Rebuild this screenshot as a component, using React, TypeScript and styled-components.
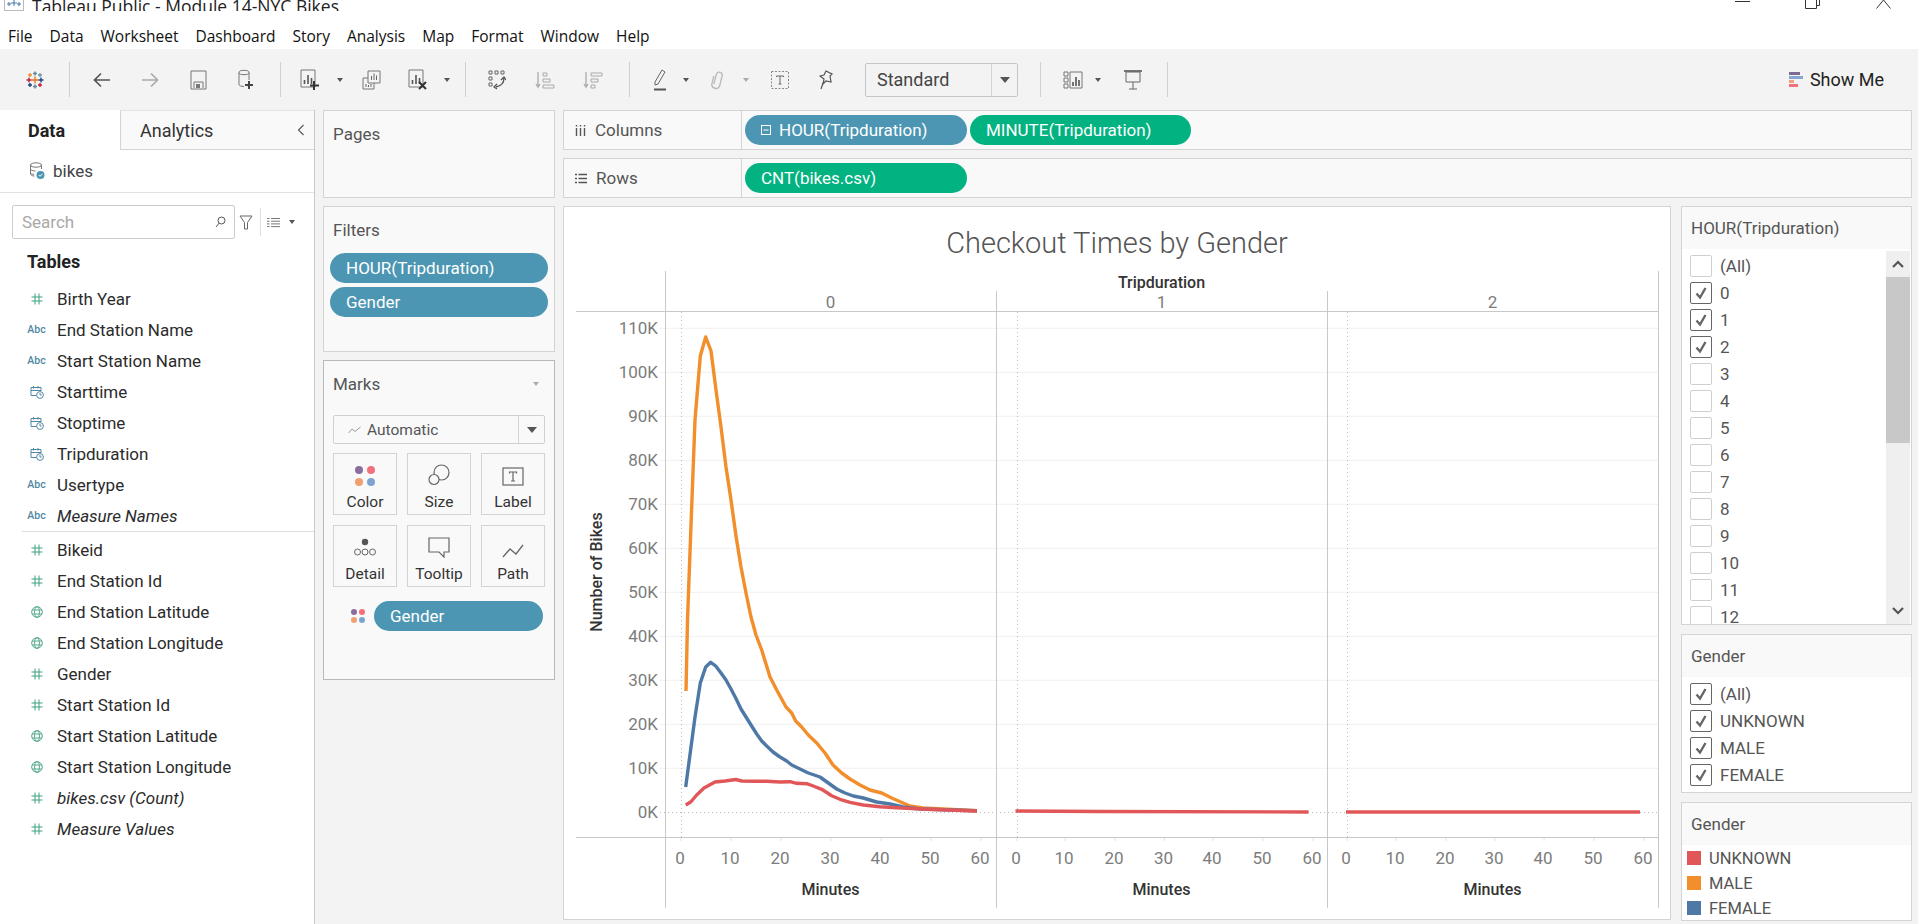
import React from "react";
import styled, { createGlobalStyle } from "styled-components";

const UI = `Roboto, "Liberation Sans", sans-serif`;

const Global = createGlobalStyle`
  html, body { margin: 0; padding: 0; background: #fff; }
  body { font-family: ${UI}; overflow: hidden; }
  * { box-sizing: border-box; }
`;

const Page = styled.div`
  width: 1918px;
  height: 924px;
  display: flex;
  flex-direction: column;
  overflow: hidden;
  background: #f3f3f3;
`;

/* window chrome */
const TitleBar = styled.div`
  height: 11px;
  flex: none;
  background: #fff;
  display: flex;
  align-items: flex-end;
  overflow: hidden;
  padding-left: 4px;
`;
const TitleText = styled.span`
  font: 17.5px/20px "Open Sans", sans-serif;
  color: #222;
  margin-left: 8px;
  margin-bottom: -5px;
  white-space: nowrap;
`;
const WindowButtons = styled.div`
  margin-left: auto;
  display: flex;
  align-self: flex-start;
`;
const WindowButton = styled.svg<{ $gap: number }>`
  display: block;
  margin-right: ${(p) => p.$gap}px;
`;

const MenuBar = styled.nav`
  height: 38px;
  flex: none;
  padding: 12px 0 0 8px;
  background: #fff;
  display: flex;
  align-items: center;
  gap: 17px;
  font: 15.5px "Open Sans", sans-serif;
  color: #111;
`;

/* toolbar */
const Toolbar = styled.div`
  height: 61px;
  flex: none;
  display: flex;
  align-items: center;
  background: #f3f3f3;
`;
const Slot = styled.div<{ $w: number }>`
  width: ${(p) => p.$w}px;
  flex: none;
  display: flex;
  justify-content: center;
  align-items: center;
`;
const ToolSep = styled.div<{ $l?: number; $r?: number }>`
  width: 1px;
  height: 35px;
  flex: none;
  background: #cfcfcf;
  margin-left: ${(p) => p.$l ?? 0}px;
  margin-right: ${(p) => p.$r ?? 0}px;
`;
const Caret = styled.i<{ $c?: string }>`
  display: block;
  width: 0;
  height: 0;
  border-left: 3.5px solid transparent;
  border-right: 3.5px solid transparent;
  border-top: 4px solid ${(p) => p.$c ?? "#555"};
`;
const StandardSelect = styled.div`
  width: 153px;
  height: 34px;
  margin-left: 24px;
  flex: none;
  display: flex;
  align-items: center;
  border: 1px solid #c6c6c6;
  border-radius: 2px;
  font-size: 18px;
  color: #444;
  padding-left: 11px;
`;
const SelectArrowBox = styled.div`
  margin-left: auto;
  width: 26px;
  height: 100%;
  border-left: 1px solid #d4d4d4;
  display: flex;
  align-items: center;
  justify-content: center;
`;
const SelectArrow = styled.i`
  display: block;
  width: 0;
  height: 0;
  border-left: 5px solid transparent;
  border-right: 5px solid transparent;
  border-top: 6px solid #555;
`;
const ShowMe = styled.div`
  margin-left: auto;
  margin-right: 34px;
  display: flex;
  align-items: center;
  gap: 7px;
  font-size: 18px;
  color: #222;
`;

/* main layout */
const Main = styled.div`
  flex: 1;
  min-height: 0;
  display: flex;
`;
const Side = styled.aside`
  width: 315px;
  flex: none;
  background: #fff;
  border-right: 1px solid #c9c9c9;
  display: flex;
  flex-direction: column;
`;
const Tabs = styled.div`
  height: 40px;
  flex: none;
  display: flex;
`;
const DataTab = styled.div`
  width: 120px;
  padding-left: 28px;
  display: flex;
  align-items: center;
  font-size: 18px;
  font-weight: 700;
  color: #222;
  background: #fff;
`;
const AnalyticsTab = styled.div`
  flex: 1;
  padding: 0 9px 0 19px;
  display: flex;
  align-items: center;
  justify-content: space-between;
  font-size: 18px;
  color: #333;
  background: #f9f9f9;
  border-left: 1px solid #d4d4d4;
  border-top: 1px solid #e4e4e4;
  border-bottom: 1px solid #d4d4d4;
`;
const SourceRow = styled.div`
  height: 43px;
  flex: none;
  padding-left: 29px;
  display: flex;
  align-items: center;
  gap: 8px;
  font-size: 17px;
  color: #444;
  border-bottom: 1px solid #e2e2e2;
`;
const SearchRow = styled.div`
  height: 34px;
  margin: 12px 0 0 12px;
  flex: none;
  display: flex;
  align-items: center;
`;
const SearchBox = styled.div`
  width: 223px;
  height: 34px;
  flex: none;
  padding: 0 8px 0 9px;
  display: flex;
  align-items: center;
  justify-content: space-between;
  border: 1px solid #cdcdcd;
  border-radius: 2px;
  font-size: 17px;
  color: #a8a8a8;
`;
const SearchTools = styled.div`
  display: flex;
  align-items: center;
  margin-left: 4px;
`;
const ToolDivider = styled.div`
  width: 1px;
  height: 28px;
  background: #e0e0e0;
  margin: 0 6px 0 7px;
`;
const TablesHeading = styled.div`
  height: 44px;
  flex: none;
  padding: 1px 0 0 27px;
  display: flex;
  align-items: center;
  font-size: 18px;
  font-weight: 700;
  color: #222;
`;
const FieldList = styled.div`
  display: flex;
  flex-direction: column;
`;
const FieldRow = styled.div<{ $italic?: boolean }>`
  height: 31px;
  flex: none;
  display: flex;
  align-items: center;
  font-size: 17px;
  font-style: ${(p) => (p.$italic ? "italic" : "normal")};
  color: #2b2b2b;
`;
const FieldIcon = styled.span`
  width: 57px;
  padding-left: 25px;
  flex: none;
  display: flex;
  justify-content: center;
  padding-right: 8px;
  padding-left: 24px;
`;
const AbcMark = styled.span`
  font-size: 10.5px;
  font-style: normal;
  font-weight: 500;
  color: #4f87a3;
`;
const FieldDivider = styled.div`
  height: 1px;
  margin: 0 0 2px 22px;
  background: #dedede;
  flex: none;
`;

const ShelfColumn = styled.div`
  width: 232px;
  margin-left: 8px;
  flex: none;
  display: flex;
  flex-direction: column;
  gap: 8px;
`;
const Card = styled.section<{ $h: number; $dark?: boolean }>`
  height: ${(p) => p.$h}px;
  flex: none;
  background: #f9f9f9;
  border: 1px solid ${(p) => (p.$dark ? "#b9b9b9" : "#d4d4d4")};
  padding: 0 6px;
`;
const CardLabel = styled.div`
  height: 46px;
  padding-left: 3px;
  display: flex;
  align-items: center;
  justify-content: space-between;
  font-size: 17px;
  color: #555;
`;
const Pill = styled.div<{ $tone?: "blue" | "green"; $w?: number }>`
  width: ${(p) => (p.$w ? `${p.$w}px` : "100%")};
  height: 30px;
  flex: none;
  display: flex;
  align-items: center;
  gap: 8px;
  padding-left: 16px;
  border-radius: 15px;
  color: #fff;
  font-size: 17px;
  white-space: nowrap;
  background: ${(p) => (p.$tone === "green" ? "#02b280" : "#4c96b3")};
`;
const PillStack = styled.div`
  margin-top: 0;
  display: flex;
  flex-direction: column;
  gap: 4px;
`;
const MarkTypeSelect = styled.div`
  height: 29px;
  margin: 8px 3px 0;
  display: flex;
  align-items: center;
  padding-left: 14px;
  gap: 6px;
  border: 1px solid #d0d0d0;
  border-radius: 2px;
  font-size: 15.5px;
  color: #555;
`;
const MarkButtons = styled.div`
  margin: 9px 3px 0;
  display: grid;
  grid-template-columns: repeat(3, 1fr);
  grid-auto-rows: 62px;
  gap: 10px;
`;
const MarkButton = styled.div`
  border: 1px solid #d4d4d4;
  display: flex;
  flex-direction: column;
  align-items: center;
  justify-content: flex-end;
  padding-bottom: 3px;
  gap: 7px;
  font-size: 15.5px;
  color: #333;
`;
const EncodingRow = styled.div`
  margin-top: 14px;
  padding-left: 21px;
  display: flex;
  align-items: center;
  gap: 9px;
`;

const Workspace = styled.div`
  flex: 1;
  min-width: 0;
  margin-left: 8px;
  padding-right: 6px;
  display: flex;
  flex-direction: column;
  gap: 8px;
`;
const Shelf = styled.div`
  height: 40px;
  flex: none;
  display: flex;
  background: #f9f9f9;
  border: 1px solid #d4d4d4;
`;
const ShelfHead = styled.div`
  width: 178px;
  flex: none;
  padding-left: 11px;
  display: flex;
  align-items: center;
  gap: 9px;
  border-right: 1px solid #d4d4d4;
  font-size: 17px;
  color: #555;
`;
const ShelfPills = styled.div`
  padding-left: 3px;
  display: flex;
  align-items: center;
  gap: 3px;
`;
const Stage = styled.div`
  height: 714px;
  flex: none;
  display: flex;
  gap: 10px;
`;
const ChartCard = styled.section`
  width: 1108px;
  flex: none;
  background: #fff;
  border: 1px solid #d4d4d4;
`;
const ChartTitle = styled.h1`
  height: 57px;
  margin: 0;
  padding-top: 14px;
  display: flex;
  align-items: center;
  justify-content: center;
  font-size: 29px;
  font-weight: 300;
  color: #555;
`;
const ChartSvg = styled.svg`
  display: block;
`;
const Rail = styled.div`
  width: 231px;
  flex: none;
  display: flex;
  flex-direction: column;
  gap: 9px;
`;
const RailCard = styled.section<{ $h: number }>`
  height: ${(p) => p.$h}px;
  flex: none;
  background: #fff;
  border: 1px solid #d4d4d4;
  overflow: hidden;
  display: flex;
  flex-direction: column;
`;
const RailHead = styled.div`
  height: 42px;
  flex: none;
  padding-left: 9px;
  display: flex;
  align-items: center;
  background: #f9f9f9;
  font-size: 17px;
  color: #555;
`;
const RailBody = styled.div`
  flex: 1;
  min-height: 0;
  display: flex;
`;
const CheckList = styled.div`
  flex: 1;
  padding: 3px 0 0 8px;
  display: flex;
  flex-direction: column;
`;
const CheckRow = styled.div`
  height: 27px;
  flex: none;
  display: flex;
  align-items: center;
  gap: 8px;
  font-size: 17px;
  color: #555;
`;
const CheckBox = styled.span<{ $on?: boolean }>`
  width: 22px;
  height: 22px;
  flex: none;
  display: flex;
  align-items: center;
  justify-content: center;
  border: 1px solid ${(p) => (p.$on ? "#666" : "#cfcfcf")};
  border-radius: 2px;
`;
const Scrollbar = styled.div`
  width: 24px;
  margin: 2px 1px 0 0;
  flex: none;
  display: flex;
  flex-direction: column;
  background: #efefef;
`;
const ScrollArrow = styled.div`
  height: 26px;
  flex: none;
  display: flex;
  align-items: center;
  justify-content: center;
`;
const ScrollThumb = styled.div`
  height: 166px;
  flex: none;
  background: #c8c8c8;
  margin-bottom: auto;
`;
const LegendList = styled.div`
  padding: 1px 0 0 5px;
  display: flex;
  flex-direction: column;
`;
const LegendRow = styled.div`
  height: 25px;
  display: flex;
  align-items: center;
  gap: 8px;
  font-size: 16.5px;
  color: #555;
`;
const Swatch = styled.span<{ $c: string }>`
  width: 14px;
  height: 14px;
  margin-top: -1px;
  flex: none;
  background: ${(p) => p.$c};
`;

/* icons */
const Glyph = ({ w = 22, h = 22, children }: { w?: number; h?: number; children: React.ReactNode }) => (
  <svg width={w} height={h} viewBox={`0 0 ${w} ${h}`} fill="none" stroke="#666" strokeWidth="1">
    {children}
  </svg>
);

const Cross = ({ x, y, r, c }: { x: number; y: number; r: number; c: string }) => (
  <path d={`M${x - r} ${y}H${x + r}M${x} ${y - r}V${y + r}`} stroke={c} strokeWidth="1.4" />
);

const TableauLogo = () => (
  <Glyph w={20} h={20}>
    <Cross x={10} y={10} r={3.5} c="#e8762d" />
    <Cross x={10} y={3.5} r={2} c="#5b879b" />
    <Cross x={10} y={16.5} r={2} c="#59879b" />
    <Cross x={4} y={10} r={2.5} c="#c72037" />
    <Cross x={16} y={10} r={2.5} c="#1f457e" />
    <Cross x={5} y={5} r={2} c="#eb912b" />
    <Cross x={15} y={5} r={2} c="#7199a6" />
    <Cross x={5} y={15} r={2} c="#1f447e" />
    <Cross x={15} y={15} r={2} c="#c72035" />
  </Glyph>
);
const ArrowIcon = ({ dir, c }: { dir: "l" | "r"; c: string }) => (
  <Glyph w={18} h={16}>
    <path d={dir === "l" ? "M17 8H2M8 1.5 1.5 8 8 14.5" : "M1 8H16M10 1.5 16.5 8 10 14.5"} stroke={c} strokeWidth="1.7" />
  </Glyph>
);
const SaveIcon = () => (
  <Glyph w={17} h={20}>
    <path d="M1 1h15v18H1zM4 18v-6h9v6" stroke="#777" />
    <rect x="6" y="14" width="4" height="4" fill="#777" stroke="none" />
  </Glyph>
);
const NewSourceIcon = () => (
  <Glyph w={16} h={22}>
    <ellipse cx="6" cy="3.5" rx="5" ry="2.2" stroke="#777" />
    <path d="M1 3.5v12c0 1 2 2 5 2M11 3.5V11" stroke="#777" />
    <path d="M11 12v8M7 16h8" stroke="#444" strokeWidth="2" />
  </Glyph>
);
const SheetIcon = ({ mark }: { mark: "plus" | "x" }) => (
  <Glyph w={20} h={22}>
    <path d="M1 1h14v17H1z" stroke="#777" />
    <path d="M4.5 15v-4M8 15V6M11.5 15V9" stroke="#555" strokeWidth="1.6" />
    {mark === "plus" ? (
      <path d="M14 12v9M10 16.5h9" stroke="#333" strokeWidth="2" />
    ) : (
      <path d="M11 13l7 7M18 13l-7 7" stroke="#333" strokeWidth="2" />
    )}
  </Glyph>
);
const DuplicateIcon = () => (
  <Glyph w={19} h={20}>
    <path d="M6 1h12v12H6z" stroke="#777" />
    <path d="M9.5 10V6M12 10V3.5M14.5 10V5.5" stroke="#666" />
    <path d="M1 8h5M1 8v11h11v-6" stroke="#777" />
    <path d="M4 17v-3M6.5 17v-2M9 17v-3" stroke="#666" />
  </Glyph>
);
const SwapIcon = () => (
  <Glyph w={18} h={20}>
    <path d="M1 1h3v3H1zM7 1h3v3H7zM13 1h3v3h-3zM1 7h3v3H1zM1 13h3v3H1z" stroke="#666" />
    <path d="M16 8c0 5-3 8-8 9" stroke="#555" strokeWidth="1.3" />
    <path d="M13 10l3-3 2 3M9 14l-3 3 3 2" stroke="#555" strokeWidth="1.3" />
  </Glyph>
);
const SortIcon = ({ desc }: { desc?: boolean }) => (
  <Glyph w={20} h={18}>
    <path d="M3 1v15M1 13l2 3 2-3" stroke="#aaa" strokeWidth="1.3" />
    {desc ? (
      <path d="M8 2h11v3H8zM8 8h7v3H8zM8 14h4v3H8z" stroke="#aaa" />
    ) : (
      <path d="M8 2h4v3H8zM8 8h7v3H8zM8 14h11v3H8z" stroke="#aaa" />
    )}
  </Glyph>
);
const HighlightIcon = () => (
  <Glyph w={14} h={22}>
    <path d="M9 1l3 2-7 12-3 1 0-3z" stroke="#666" />
    <path d="M1 20.5h12" stroke="#555" strokeWidth="2" />
  </Glyph>
);
const ClipIcon = () => (
  <Glyph w={14} h={20}>
    <path d="M4 15V5c0-4 6-4 6 0v10c0 5-8 5-8 0V7" stroke="#bbb" strokeWidth="1.4" transform="rotate(14 7 10)" />
  </Glyph>
);
const TextBoxIcon = () => (
  <Glyph w={18} h={18}>
    <rect x="0.5" y="0.5" width="17" height="17" stroke="#888" strokeDasharray="2 1.5" />
    <path d="M5.5 6V5h7v1M9 5v8M7.5 13h3" stroke="#666" />
  </Glyph>
);
const PinIcon = () => (
  <Glyph w={14} h={20}>
    <path d="M7 1l6 3-2 2 1 6-5-1-3 3 1-5-4-3 4-1z" stroke="#555" strokeWidth="1.2" />
    <path d="M4 13l-2 6" stroke="#555" strokeWidth="1.2" />
  </Glyph>
);
const ShowMeSmall = () => (
  <Glyph w={20} h={18}>
    <path d="M1 1h4v4H1zM1 7h4v4H1zM1 13h4v4H1zM7 1h12v16H7z" stroke="#777" />
    <path d="M10 15v-4M13 15V6M16 15V9" stroke="#555" strokeWidth="1.6" />
  </Glyph>
);
const PresentIcon = () => (
  <Glyph w={18} h={20}>
    <path d="M0 1h18" stroke="#555" strokeWidth="1.6" />
    <path d="M2 2h14v10H2zM9 12v7M5 19h8" stroke="#666" />
  </Glyph>
);
const ShowMeBars = () => (
  <Glyph w={14} h={15}>
    <rect x="0" y="0" width="11" height="3" fill="#7f6a93" stroke="none" />
    <rect x="0" y="4" width="14" height="3" fill="#87a7cf" stroke="none" />
    <rect x="0" y="8" width="5" height="3" fill="#f0a07a" stroke="none" />
    <rect x="0" y="12" width="9" height="3" fill="#f0707c" stroke="none" />
  </Glyph>
);
const ChevronLeft = () => (
  <Glyph w={8} h={12}>
    <path d="M6.5 1 1.5 6l5 5" stroke="#555" strokeWidth="1.1" />
  </Glyph>
);
const SourceIcon = () => (
  <Glyph w={16} h={18}>
    <ellipse cx="7" cy="3" rx="5.5" ry="2.2" stroke="#777" />
    <path d="M1.5 3v9c0 1 1.5 2 4 2M12.5 3v4M1.5 7c0 1 2 2 5 2M1.5 10.5c0 1 1.5 1.7 3.5 1.9" stroke="#777" />
    <circle cx="11.5" cy="13" r="4" fill="#4c96b3" stroke="none" />
    <path d="M9.8 13l1.3 1.3 2.2-2.4" stroke="#fff" />
  </Glyph>
);
const SearchGlass = () => (
  <Glyph w={11} h={12}>
    <circle cx="6.5" cy="4.5" r="3.5" stroke="#555" />
    <path d="M4 7.2 1 11" stroke="#555" />
  </Glyph>
);
const FilterIcon = () => (
  <Glyph w={14} h={15}>
    <path d="M1 1h12L8.5 7.5V14h-3V7.5z" stroke="#666" />
  </Glyph>
);
const ListIcon = () => (
  <Glyph w={13} h={11}>
    <path d="M0 1.5h2.5M4 1.5h9M0 4.2h2.5M4 4.2h9M0 6.9h2.5M4 6.9h9M0 9.6h2.5M4 9.6h9" stroke="#777" />
  </Glyph>
);
const HashIcon = () => (
  <Glyph w={12} h={12}>
    <path d="M4 .5v11M8 .5v11M.5 4h11M.5 8h11" stroke="#3f9f80" />
  </Glyph>
);
const GlobeIcon = () => (
  <Glyph w={12} h={12}>
    <circle cx="6" cy="6" r="5.3" stroke="#57a98e" />
    <ellipse cx="6" cy="6" rx="2.4" ry="5.3" stroke="#57a98e" />
    <path d="M1 4h10M1 8h10" stroke="#57a98e" />
  </Glyph>
);
const DateIcon = () => (
  <Glyph w={14} h={14}>
    <path d="M1 2.5h10V6M1 2.5v8h5M1 5.5h10M3.5 1v2.5M8 1v2.5" stroke="#4f87a3" />
    <circle cx="10" cy="10" r="3.4" stroke="#4f87a3" />
    <path d="M10 8v2h1.6" stroke="#4f87a3" />
  </Glyph>
);
const ColumnsIcon = () => (
  <Glyph w={11} h={11}>
    <path d="M1.5 3v8M5.5 3v8M9.5 3v8" stroke="#555" strokeWidth="1.4" />
    <path d="M1.5 0v1.5M5.5 0v1.5M9.5 0v1.5" stroke="#555" strokeWidth="1.4" />
  </Glyph>
);
const RowsIcon = () => (
  <Glyph w={12} h={11}>
    <path d="M3.5 1.5H12M3.5 5.5H12M3.5 9.5H12M0 1.5h2M0 5.5h2M0 9.5h2" stroke="#555" strokeWidth="1.4" />
  </Glyph>
);
const CollapseBox = () => (
  <svg width="10" height="10" viewBox="0 0 10 10" fill="none" stroke="#fff">
    <rect x="0.5" y="0.5" width="9" height="9" />
    <path d="M2.5 5h5" />
  </svg>
);
const LineMini = () => (
  <Glyph w={13} h={8}>
    <path d="M.5 7 4 3l3 2.5L12.5 1" stroke="#999" />
  </Glyph>
);
const ColorDots = ({ r = 4, step = 12 }: { r?: number; step?: number }) => {
  const s = step + r * 2;
  return (
    <Glyph w={s} h={s}>
      <g stroke="none">
        <circle cx={r} cy={r} r={r} fill="#8a6f9c" />
        <circle cx={r + step} cy={r} r={r} fill="#f2707c" />
        <circle cx={r} cy={r + step} r={r} fill="#f0a070" />
        <circle cx={r + step} cy={r + step} r={r} fill="#7fa3cf" />
      </g>
    </Glyph>
  );
};
const SizeIcon = () => (
  <Glyph w={22} h={22}>
    <circle cx="13.5" cy="8.5" r="7.5" stroke="#666" strokeWidth="1.2" />
    <circle cx="6" cy="15.5" r="5" fill="#f9f9f9" stroke="#666" strokeWidth="1.2" />
  </Glyph>
);
const LabelIcon = () => (
  <Glyph w={22} h={19}>
    <rect x="1" y="1" width="20" height="17" stroke="#666" strokeWidth="1.2" />
    <path d="M7.5 6.5V5h7v1.5M11 5v9M9 14h4" stroke="#666" strokeWidth="1.2" />
  </Glyph>
);
const DetailIcon = () => (
  <Glyph w={24} h={20}>
    <circle cx="12" cy="4" r="3.2" fill="#555" stroke="none" />
    <circle cx="4.5" cy="14" r="3" stroke="#666" />
    <circle cx="12" cy="14" r="3" stroke="#666" />
    <circle cx="19.5" cy="14" r="3" stroke="#666" />
  </Glyph>
);
const TooltipIcon = () => (
  <Glyph w={22} h={21}>
    <path d="M1 1h20v14h-5v5l-5-5H1z" stroke="#666" strokeWidth="1.2" />
  </Glyph>
);
const PathIcon = () => (
  <Glyph w={22} h={14}>
    <path d="M1 13 8 5l6 5 7-9" stroke="#666" strokeWidth="1.3" />
  </Glyph>
);
const CheckMark = () => (
  <svg width="14" height="14" viewBox="0 0 14 14" fill="none" stroke="#666" strokeWidth="2.4">
    <path d="M2.5 7.5 6 11.5 11.5 2" />
  </svg>
);

/* chart data, in page pixels of the plot area */
type Pt = [number, number];
const orange: Pt[] = [
  [686, 691], [687.5, 620], [691, 525], [695, 420], [700.3, 356], [705.7, 337], [711, 351], [716, 390], [721, 427],
  [726, 467], [731, 500], [736, 536], [741, 567], [746, 593], [751, 617], [756, 635], [761.7, 650], [770, 677],
  [776.7, 690], [786, 707], [791.7, 713], [795.7, 721], [801.7, 727], [808.3, 735], [816.7, 743], [825, 753], [833, 765],
  [841.7, 773], [850, 779], [860, 785], [870, 790], [881.7, 793], [891.7, 798], [903, 803], [910, 806], [923, 808],
  [943, 809], [977, 810.7],
];
const blue: Pt[] = [
  [685.7, 787], [695, 717], [700.3, 683], [705.7, 667], [710.7, 662.3], [715.7, 666], [721, 673], [726, 680], [731, 689],
  [735.7, 698], [741, 709], [746, 717], [751, 725], [756.7, 734], [761.7, 741], [766.7, 746], [773, 752], [780, 757],
  [786.7, 761], [791.7, 765], [800, 769], [808.3, 773], [820, 777], [828.3, 783], [836.7, 789], [845, 793], [853.3, 796],
  [863.3, 798], [876.7, 802], [890, 804], [903.3, 807], [920, 809], [977, 810.7],
];
const red: Pt[] = [
  [685.7, 805], [690.7, 802], [696.7, 795], [704, 788], [715, 782], [725, 781], [735.7, 779.5], [741.7, 781], [755, 781.3],
  [766.7, 781.3], [780, 782], [790, 781.7], [796.7, 783.3], [806.7, 783.7], [813.3, 786], [821.7, 789.3], [831.7, 795.7],
  [840, 799.3], [850, 802.3], [863.3, 805], [880, 806.7], [896.7, 807.7], [926.7, 809.3], [977, 811],
];

const yTicks = [110, 100, 90, 80, 70, 60, 50, 40, 30, 20, 10, 0];
const panes = [
  { head: "0", center: 830.5, ticks: [681, 731, 781, 831, 881, 931, 981], dotted: 681 },
  { head: "1", center: 1161.5, ticks: [1017, 1065, 1115, 1164.5, 1213, 1263, 1313], dotted: 1017 },
  { head: "2", center: 1492.5, ticks: [1347, 1396, 1446, 1495, 1544, 1594, 1644], dotted: 1347 },
];
const minuteLabels = [0, 10, 20, 30, 40, 50, 60];
const line = (pts: Pt[]) => pts.map((p) => p.join(",")).join(" ");

const Chart = () => (
  <ChartSvg width={1106} height={655} viewBox="564 264 1106 655" fontFamily="Roboto, sans-serif">
    {yTicks.map((t) => {
      const y = 812.3 - t * 4.4;
      return (
        <g key={t}>
          {t > 0 && <line x1={660} x2={1658} y1={y} y2={y} stroke="#f0f0f0" strokeWidth="1" />}
          <text x={658} y={y + 6} textAnchor="end" fontSize="17" fill="#7c7c7c">
            {t}K
          </text>
        </g>
      );
    })}
    <line x1={660} x2={1658} y1={812.5} y2={812.5} stroke="#bbb" strokeDasharray="1 3" />
    {panes.map((p) => (
      <g key={p.head}>
        <line x1={p.dotted + 0.5} x2={p.dotted + 0.5} y1={312} y2={837} stroke="#bbb" strokeDasharray="1 3" />
        <text x={p.center} y={307.5} textAnchor="middle" fontSize="17" fill="#7c7c7c">
          {p.head}
        </text>
        <text x={p.center} y={895} textAnchor="middle" fontSize="16" fontWeight="500" fill="#333">
          Minutes
        </text>
        {p.ticks.map((x, i) => (
          <g key={x}>
            <line x1={x} x2={x} y1={837} y2={841} stroke="#e4e4e4" />
            <text x={x - 1} y={864} textAnchor="middle" fontSize="17" fill="#7c7c7c">
              {minuteLabels[i]}
            </text>
          </g>
        ))}
      </g>
    ))}
    <line x1={665.5} x2={665.5} y1={271} y2={908} stroke="#c8c8c8" />
    <line x1={996.5} x2={996.5} y1={291} y2={908} stroke="#c8c8c8" />
    <line x1={1327.5} x2={1327.5} y1={291} y2={908} stroke="#c8c8c8" />
    <line x1={1658.5} x2={1658.5} y1={271} y2={908} stroke="#c8c8c8" />
    <line x1={576} x2={1659} y1={311.5} y2={311.5} stroke="#c8c8c8" />
    <line x1={576} x2={1659} y1={837.5} y2={837.5} stroke="#c8c8c8" />
    <text x={1161.5} y={287.5} textAnchor="middle" fontSize="16" fontWeight="500" fill="#333">
      Tripduration
    </text>
    <text
      transform="translate(602 572) rotate(-90)"
      textAnchor="middle"
      fontSize="16"
      fontWeight="500"
      fill="#333"
    >
      Number of Bikes
    </text>
    <g fill="none" strokeWidth="3.4" strokeLinejoin="round">
      <polyline points={line(orange)} stroke="#f28e2b" />
      <polyline points={line(blue)} stroke="#4e79a7" />
      <polyline points={line(red)} stroke="#e15759" />
      <polyline points="1015.5,811 1100,811.5 1308.5,812" stroke="#e15759" />
      <polyline points="1346,812 1640,812" stroke="#e15759" />
    </g>
  </ChartSvg>
);

const menus = ["File", "Data", "Worksheet", "Dashboard", "Story", "Analysis", "Map", "Format", "Window", "Help"];

type FieldKind = "hash" | "abc" | "date" | "geo";
type Field = { name: string; kind: FieldKind; italic?: boolean };
const dimensions: Field[] = [
  { name: "Birth Year", kind: "hash" },
  { name: "End Station Name", kind: "abc" },
  { name: "Start Station Name", kind: "abc" },
  { name: "Starttime", kind: "date" },
  { name: "Stoptime", kind: "date" },
  { name: "Tripduration", kind: "date" },
  { name: "Usertype", kind: "abc" },
  { name: "Measure Names", kind: "abc", italic: true },
];
const measures: Field[] = [
  { name: "Bikeid", kind: "hash" },
  { name: "End Station Id", kind: "hash" },
  { name: "End Station Latitude", kind: "geo" },
  { name: "End Station Longitude", kind: "geo" },
  { name: "Gender", kind: "hash" },
  { name: "Start Station Id", kind: "hash" },
  { name: "Start Station Latitude", kind: "geo" },
  { name: "Start Station Longitude", kind: "geo" },
  { name: "bikes.csv (Count)", kind: "hash", italic: true },
  { name: "Measure Values", kind: "hash", italic: true },
];

const FieldItem = ({ field }: { field: Field }) => (
  <FieldRow $italic={field.italic}>
    <FieldIcon>
      {field.kind === "hash" && <HashIcon />}
      {field.kind === "geo" && <GlobeIcon />}
      {field.kind === "date" && <DateIcon />}
      {field.kind === "abc" && <AbcMark>Abc</AbcMark>}
    </FieldIcon>
    {field.name}
  </FieldRow>
);

const hours = ["0", "1", "2", "3", "4", "5", "6", "7", "8", "9", "10", "11", "12"];

const App = () => (
  <Page>
    <Global />
    <TitleBar>
      <svg width="20" height="11" viewBox="0 0 20 11" fill="none" stroke="#8aa">
        <rect x="0.5" y="-8" width="19" height="18.5" stroke="#bbb" />
        <path d="M10 0v6M7 3h6M5 2v4M3 4h4M15 2v4M13 4h4" stroke="#47a" />
      </svg>
      <TitleText>Tableau Public - Module 14-NYC Bikes</TitleText>
      <WindowButtons>
        <WindowButton $gap={55} width="15" height="3" viewBox="0 0 15 3">
          <path d="M0 1.5h15" stroke="#333" />
        </WindowButton>
        <WindowButton $gap={56} width="15" height="9" viewBox="0 0 15 9" fill="none">
          <path d="M.5 0v8.5h11V0M11.5 5.5h3V0" stroke="#333" />
        </WindowButton>
        <WindowButton $gap={27} width="15" height="9" viewBox="0 0 15 9" fill="none">
          <path d="M3 0l6 8M12 0 4 10M.5 9 7 1" stroke="#333" strokeWidth="0" />
          <path d="M7.5 0 .5 8.5M7.5 0l7 8.5" stroke="#333" />
        </WindowButton>
      </WindowButtons>
    </TitleBar>
    <MenuBar>
      {menus.map((m) => (
        <span key={m}>{m}</span>
      ))}
    </MenuBar>
    <Toolbar>
      <Slot $w={69}>
        <TableauLogo />
      </Slot>
      <ToolSep $r={8} />
      <Slot $w={48}>
        <ArrowIcon dir="l" c="#555" />
      </Slot>
      <Slot $w={48}>
        <ArrowIcon dir="r" c="#aaa" />
      </Slot>
      <Slot $w={48}>
        <SaveIcon />
      </Slot>
      <Slot $w={48}>
        <NewSourceIcon />
      </Slot>
      <ToolSep $l={10} $r={7} />
      <Slot $w={44}>
        <SheetIcon mark="plus" />
      </Slot>
      <Slot $w={16}>
        <Caret />
      </Slot>
      <Slot $w={46}>
        <DuplicateIcon />
      </Slot>
      <Slot $w={48}>
        <SheetIcon mark="x" />
      </Slot>
      <Slot $w={10}>
        <Caret />
      </Slot>
      <ToolSep $l={13} $r={7} />
      <Slot $w={48}>
        <SwapIcon />
      </Slot>
      <Slot $w={48}>
        <SortIcon />
      </Slot>
      <Slot $w={48}>
        <SortIcon desc />
      </Slot>
      <ToolSep $l={12} $r={10} />
      <Slot $w={40}>
        <HighlightIcon />
      </Slot>
      <Slot $w={12}>
        <Caret />
      </Slot>
      <Slot $w={51}>
        <ClipIcon />
      </Slot>
      <Slot $w={6}>
        <Caret $c="#aaa" />
      </Slot>
      <Slot $w={62}>
        <TextBoxIcon />
      </Slot>
      <Slot $w={30}>
        <PinIcon />
      </Slot>
      <StandardSelect>
        Standard
        <SelectArrowBox>
          <SelectArrow />
        </SelectArrowBox>
      </StandardSelect>
      <ToolSep $l={22} $r={10} />
      <Slot $w={43}>
        <ShowMeSmall />
      </Slot>
      <Slot $w={7}>
        <Caret />
      </Slot>
      <Slot $w={63}>
        <PresentIcon />
      </Slot>
      <ToolSep $l={3} />
      <ShowMe>
        <ShowMeBars />
        Show Me
      </ShowMe>
    </Toolbar>
    <Main>
      <Side>
        <Tabs>
          <DataTab>Data</DataTab>
          <AnalyticsTab>
            Analytics
            <ChevronLeft />
          </AnalyticsTab>
        </Tabs>
        <SourceRow>
          <SourceIcon />
          bikes
        </SourceRow>
        <SearchRow>
          <SearchBox>
            Search
            <SearchGlass />
          </SearchBox>
          <SearchTools>
            <FilterIcon />
            <ToolDivider />
            <ListIcon />
            <Slot $w={24}>
              <Caret />
            </Slot>
          </SearchTools>
        </SearchRow>
        <TablesHeading>Tables</TablesHeading>
        <FieldList>
          {dimensions.map((f) => (
            <FieldItem key={f.name} field={f} />
          ))}
          <FieldDivider />
          {measures.map((f) => (
            <FieldItem key={f.name} field={f} />
          ))}
        </FieldList>
      </Side>
      <ShelfColumn>
        <Card $h={88}>
          <CardLabel>Pages</CardLabel>
        </Card>
        <Card $h={146}>
          <CardLabel>Filters</CardLabel>
          <PillStack>
            <Pill>HOUR(Tripduration)</Pill>
            <Pill>Gender</Pill>
          </PillStack>
        </Card>
        <Card $h={320} $dark>
          <CardLabel>
            Marks
            <Slot $w={24}>
              <Caret $c="#aaa" />
            </Slot>
          </CardLabel>
          <MarkTypeSelect>
            <LineMini />
            Automatic
            <SelectArrowBox>
              <SelectArrow />
            </SelectArrowBox>
          </MarkTypeSelect>
          <MarkButtons>
            <MarkButton>
              <ColorDots />
              Color
            </MarkButton>
            <MarkButton>
              <SizeIcon />
              Size
            </MarkButton>
            <MarkButton>
              <LabelIcon />
              Label
            </MarkButton>
            <MarkButton>
              <DetailIcon />
              Detail
            </MarkButton>
            <MarkButton>
              <TooltipIcon />
              Tooltip
            </MarkButton>
            <MarkButton>
              <PathIcon />
              Path
            </MarkButton>
          </MarkButtons>
          <EncodingRow>
            <ColorDots r={3} step={8} />
            <Pill $w={169}>Gender</Pill>
          </EncodingRow>
        </Card>
      </ShelfColumn>
      <Workspace>
        <Shelf>
          <ShelfHead>
            <ColumnsIcon />
            Columns
          </ShelfHead>
          <ShelfPills>
            <Pill $w={222}>
              <CollapseBox />
              HOUR(Tripduration)
            </Pill>
            <Pill $w={221} $tone="green">
              MINUTE(Tripduration)
            </Pill>
          </ShelfPills>
        </Shelf>
        <Shelf>
          <ShelfHead>
            <RowsIcon />
            Rows
          </ShelfHead>
          <ShelfPills>
            <Pill $w={222} $tone="green">
              CNT(bikes.csv)
            </Pill>
          </ShelfPills>
        </Shelf>
        <Stage>
          <ChartCard>
            <ChartTitle>Checkout Times by Gender</ChartTitle>
            <Chart />
          </ChartCard>
          <Rail>
            <RailCard $h={419}>
              <RailHead>HOUR(Tripduration)</RailHead>
              <RailBody>
                <CheckList>
                  <CheckRow>
                    <CheckBox />
                    (All)
                  </CheckRow>
                  {hours.map((h, i) => (
                    <CheckRow key={h}>
                      <CheckBox $on={i < 3}>{i < 3 && <CheckMark />}</CheckBox>
                      {h}
                    </CheckRow>
                  ))}
                </CheckList>
                <Scrollbar>
                  <ScrollArrow>
                    <svg width="12" height="8" viewBox="0 0 12 8" fill="none" stroke="#555" strokeWidth="2.2">
                      <path d="M1 7l5-5 5 5" />
                    </svg>
                  </ScrollArrow>
                  <ScrollThumb />
                  <ScrollArrow>
                    <svg width="12" height="8" viewBox="0 0 12 8" fill="none" stroke="#555" strokeWidth="2.2">
                      <path d="M1 1l5 5 5-5" />
                    </svg>
                  </ScrollArrow>
                </Scrollbar>
              </RailBody>
            </RailCard>
            <RailCard $h={159}>
              <RailHead>Gender</RailHead>
              <CheckList>
                {["(All)", "UNKNOWN", "MALE", "FEMALE"].map((g) => (
                  <CheckRow key={g}>
                    <CheckBox $on>
                      <CheckMark />
                    </CheckBox>
                    {g}
                  </CheckRow>
                ))}
              </CheckList>
            </RailCard>
            <RailCard $h={119}>
              <RailHead>Gender</RailHead>
              <LegendList>
                <LegendRow>
                  <Swatch $c="#e15759" />
                  UNKNOWN
                </LegendRow>
                <LegendRow>
                  <Swatch $c="#f28e2b" />
                  MALE
                </LegendRow>
                <LegendRow>
                  <Swatch $c="#4e79a7" />
                  FEMALE
                </LegendRow>
              </LegendList>
            </RailCard>
          </Rail>
        </Stage>
      </Workspace>
    </Main>
  </Page>
);

export default App;
